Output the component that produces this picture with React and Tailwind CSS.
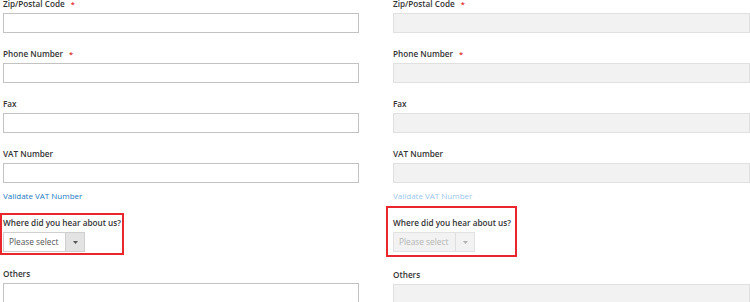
import React from 'react';

const FONT = { fontFamily: '"Open Sans", "Liberation Sans", sans-serif' };

function Label({ children, required }) {
  return (
    <div className="h-[12px] text-[8.2px] leading-[13px] font-semibold text-[#333]">
      {children}
      {required && <span className="ml-[6px] text-[#e02b27] text-[7.5px]">*</span>}
    </div>
  );
}

function Input({ disabled }) {
  return (
    <div
      className={`mt-[4px] h-[20px] border ${disabled ? 'bg-[#f2f2f2] border-[#e0e0e0]' : 'bg-white border-[#c2c2c2]'}`}
    />
  );
}

function Field({ label, required, disabled }) {
  return (
    <div className="mb-[14px]">
      <Label required={required}>{label}</Label>
      <Input disabled={disabled} />
    </div>
  );
}

function Select({ disabled }) {
  return (
    <div
      className={`mt-[4px] flex h-[20px] w-[82px] border ${disabled ? 'bg-[#f2f2f2] border-[#e2e2e2] text-[#b5b5b5]' : 'bg-white border-[#cfcfcf] text-[#555]'}`}
    >
      <div className="flex-1 pl-[5px] text-[8.3px] leading-[18px]">Please select</div>
      <div
        className={`flex w-[19px] items-center justify-center border-l ${disabled ? 'border-[#dedede] bg-[#f2f2f2]' : 'border-[#cfcfcf] bg-[#e3e3e3]'}`}
      >
        <svg width="5" height="3" viewBox="0 0 5 3">
          <path d="M0 0h5L2.5 3z" fill={disabled ? '#b0b0b0' : '#555'} />
        </svg>
      </div>
    </div>
  );
}

function Column({ disabled }) {
  return (
    <div className={disabled ? 'w-[357px]' : 'w-[356px]'}>
      <Field label="Zip/Postal Code" required disabled={disabled} />
      <Field label="Phone Number" required disabled={disabled} />
      <Field label="Fax" disabled={disabled} />
      <div>
        <Label>VAT Number</Label>
        <Input disabled={disabled} />
        <div
          className={`mt-[6px] h-[12px] text-[8px] leading-[13px] ${disabled ? 'text-[#9cc7ec]' : 'text-[#1979c3]'}`}
        >
          Validate VAT Number
        </div>
      </div>
      {disabled ? (
        <div className="mt-[5px] -ml-[7px] inline-block border-2 border-[#e8262b] pl-[5px] pr-[4px] pt-[8px] pb-[3px]">
          <Label>Where did you hear about us?</Label>
          <Select disabled />
        </div>
      ) : (
        <div className="mt-[15px] inline-block outline-2 outline-offset-1 outline-[#e8262b]">
          <Label>Where did you hear about us?</Label>
          <Select />
        </div>
      )}
      <div className={disabled ? 'mt-[11px]' : 'mt-[15px]'}>
        <Label>Others</Label>
        <Input disabled={disabled} />
      </div>
    </div>
  );
}

export default function App() {
  return (
    <div className="w-[750px] h-[302px] overflow-hidden bg-white" style={FONT}>
      <div className="-mt-[3px] flex pl-[3px] gap-[34px]">
        <Column />
        <Column disabled />
      </div>
    </div>
  );
}
